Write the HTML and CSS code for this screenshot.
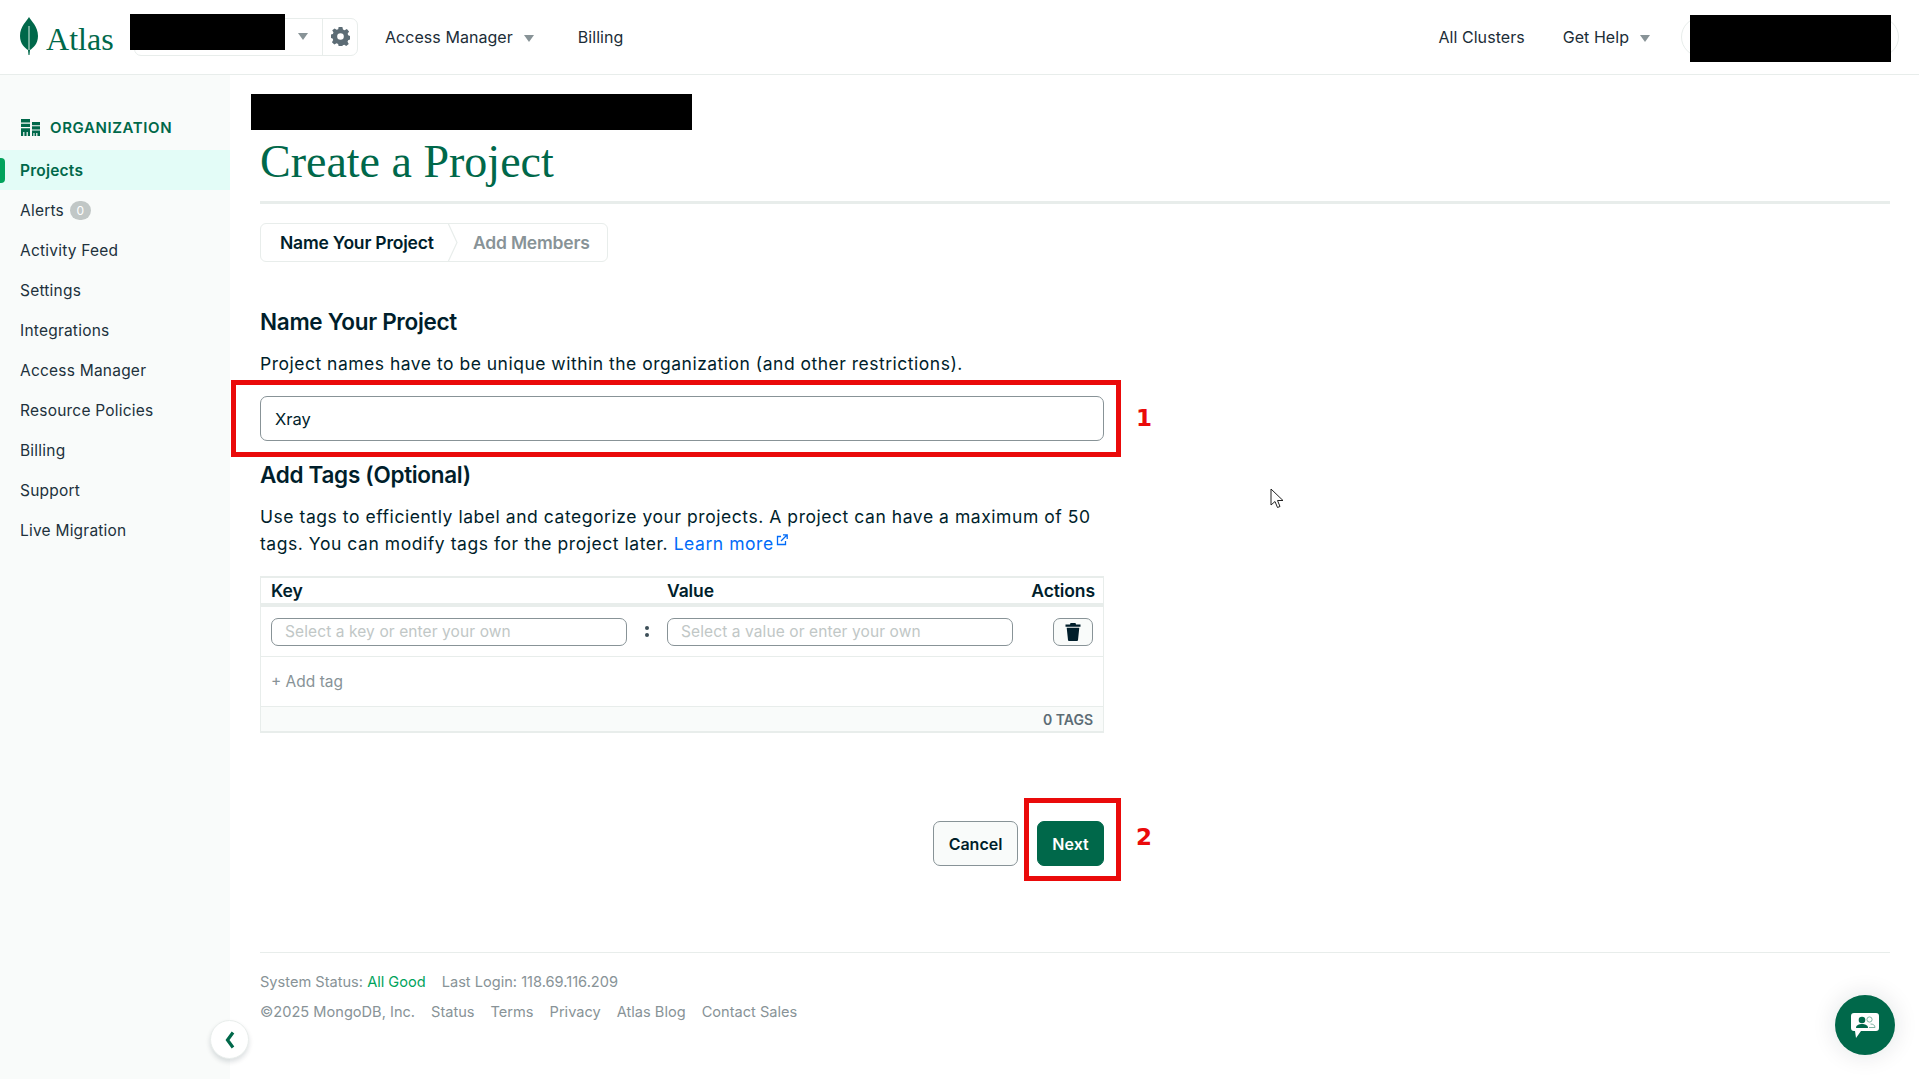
FILE: index.html
```html
<!DOCTYPE html>
<html lang="en">
<head>
<meta charset="utf-8">
<title>Create a Project</title>
<link rel="stylesheet" href="styles.css">
</head>
<body>
<header class="topbar">
  <div class="logo">
    <svg class="leaf" viewBox="0 0 18 38" width="18" height="38"><path d="M9 0C11 4 18 9 18 19C18 27 13 31 10 33L9.500 38H8.500L8 33C5 31 0 27 0 19C0 9 7 4 9 0Z" fill="#00684a"/><path d="M9 9V33" stroke="#b8dccd" stroke-width="1.200"/></svg>
    <span class="logo-text">Atlas</span>
  </div>
  <div class="chooser">
    <div class="chooser-name"><span class="caret"></span></div>
    <div class="chooser-gear">
      <svg viewBox="0 0 20 20" width="19" height="19"><path fill="#5c6c75" fill-rule="evenodd" d="M8 0h4l.6 2.700 1.700.7L16.700 2 19 4.800l-1.500 2.300.6 1.700L20 9.500v3.700l-2 .7-.6 1.600 1.300 2.300L16 20l-2-1.300-1.600.6L12 20H8l-.5-2.200-1.700-.6L3.500 18.500 1 16l1.300-2.300-.6-1.600L0 11.500V8l2-.6.6-1.700L1.300 3.500 3.800 1.500l2.100 1.400 1.700-.6zM10 6.500a3.500 3.500 0 1 0 0 7 3.500 3.500 0 0 0 0-7z"/></svg>
    </div>
  </div>
  <nav class="topnav">
    <a class="toplink">Access Manager<span class="caret caret-gap"></span></a>
    <a class="toplink">Billing</a>
  </nav>
  <div class="top-right">
    <a class="toplink">All Clusters</a>
    <a class="toplink">Get Help<span class="caret caret-gap"></span></a>
    <div class="user-pill"><div class="redact redact-user"></div></div>
  </div>
  <div class="redact redact-project"></div>
</header>

<div class="shell">
  <aside class="sidebar">
    <div class="org-head">
      <svg viewBox="0 0 19 17" width="19" height="17"><path fill="#00684a" d="M0 0h9v3.500H0zM0 4.700h9v3.400H0zM0 9.300h9V17H6.800v-4H5.600v4H3.400v-4H2.200v4H0zM11 3h8v3.200h-8zM11 7.300h8v3.200h-8zM11 11.600h8V17h-2.600v-3h-1.200v3h-1.700v-3h-1.100v3H11z"/></svg>
      <span>ORGANIZATION</span>
    </div>
    <ul class="side-list">
      <li class="side-item active">Projects</li>
      <li class="side-item">Alerts <span class="count">0</span></li>
      <li class="side-item">Activity Feed</li>
      <li class="side-item">Settings</li>
      <li class="side-item">Integrations</li>
      <li class="side-item">Access Manager</li>
      <li class="side-item">Resource Policies</li>
      <li class="side-item">Billing</li>
      <li class="side-item">Support</li>
      <li class="side-item">Live Migration</li>
    </ul>
  </aside>

  <main class="content">
    <div class="redact redact-crumb"></div>
    <h1 class="title">Create a Project</h1>
    <div class="steps">
      <span class="step step-on">Name Your Project</span>
      <svg class="step-sep" viewBox="0 0 11 39" width="11" height="39"><path d="M1 0L10 19.500L1 39" fill="none" stroke="#e8edeb" stroke-width="1.200"/></svg>
      <span class="step step-off">Add Members</span>
    </div>

    <section class="form">
      <h2 class="h-name">Name Your Project</h2>
      <p class="desc">Project names have to be unique within the organization (and other restrictions).</p>
      <div class="field">
        <input class="name-input" type="text" value="Xray">
        <div class="annot annot-input"></div>
        <span class="annot-num annot-num-1">1</span>
      </div>

      <h2 class="h-tags">Add Tags (Optional)</h2>
      <p class="para">Use tags to efficiently label and categorize your projects. A project can have a maximum of 50 tags. You can modify tags for the project later. <a class="learn">Learn more<svg viewBox="0 0 12 12" width="12" height="12"><path d="M9.500 7v3.500h-8v-8H5" fill="none" stroke="#016bf8" stroke-width="1.300"/><path d="M5 7l5.500-5.500M7 .8h4.200V5" fill="none" stroke="#016bf8" stroke-width="1.300"/></svg></a></p>

      <div class="tags">
        <div class="tags-head">
          <span>Key</span><span>Value</span><span class="actions-h">Actions</span>
        </div>
        <div class="tags-row">
          <input class="tag-input" type="text" placeholder="Select a key or enter your own">
          <span class="colon"><i></i><i></i></span>
          <input class="tag-input" type="text" placeholder="Select a value or enter your own">
          <button class="trash" type="button" aria-label="Delete">
            <svg viewBox="0 0 16 18" width="16" height="18"><path fill="#001e2b" d="M5.500 0h5l.5 1.500h4.500v2.200H.5V1.500H5zM1.700 4.800h12.600L13 17a1 1 0 0 1-1 1H4a1 1 0 0 1-1-1z"/></svg>
          </button>
        </div>
        <div class="tags-add">+ Add tag</div>
        <div class="tags-foot">0 TAGS</div>
      </div>

      <div class="form-actions">
        <button class="btn btn-cancel" type="button">Cancel</button>
        <div class="next-wrap">
          <button class="btn btn-next" type="button">Next</button>
          <div class="annot annot-next"></div>
          <span class="annot-num annot-num-2">2</span>
        </div>
      </div>
    </section>

    <footer class="foot">
      <div class="foot-line"><span>System Status: <b class="good">All Good</b></span><span>Last Login: 118.69.116.209</span></div>
      <div class="foot-line"><span>©2025 MongoDB, Inc.</span><span>Status</span><span>Terms</span><span>Privacy</span><span>Atlas Blog</span><span>Contact Sales</span></div>
    </footer>
  </main>
</div>

<button class="collapse" type="button" aria-label="Collapse">
  <svg viewBox="0 0 10 18" width="10" height="18"><path d="M8 1.500L2.500 9L8 16.500" fill="none" stroke="#00684a" stroke-width="3.200"/></svg>
</button>
<button class="chat" type="button" aria-label="Chat">
  <svg viewBox="0 0 28 26" width="28" height="26"><path fill="#fff" d="M3 0h22a3 3 0 0 1 3 3v12a3 3 0 0 1-3 3H10l-5 7-1-7H3a3 3 0 0 1-3-3V3a3 3 0 0 1 3-3z"/><circle cx="11" cy="7" r="3.300" fill="#00684a"/><path d="M5 15c0-3 3-4 6-4s6 1 6 4z" fill="#00684a"/><circle cx="18.500" cy="6.500" r="2.600" fill="none" stroke="#7fb5a3" stroke-width="1"/><path d="M18 14.500h6c0-2.500-2-3.500-4.500-3.500" fill="none" stroke="#7fb5a3" stroke-width="1"/></svg>
</button>
<svg class="cursor" viewBox="0 0 14 22" width="14" height="22"><path d="M1 1v16l4-3.500 2.500 6 2.500-1-2.500-6H13z" fill="#fff" stroke="#222" stroke-width="1"/></svg>
</body>
</html>
```
FILE: styles.css
```css
* { box-sizing: border-box; }
html, body { margin: 0; height: 1079px; overflow: hidden; }
body { font-family: Inter, "Noto Sans", sans-serif; color: #001e2b; background: #fff; position: relative; }
input, button { font-family: inherit; }
p, h1, h2, ul { margin: 0; padding: 0; }

.redact { background: #000; }

.topbar { height: 75px; border-bottom: 1px solid #e8edeb; display: flex; align-items: center; position: relative; font-size: 16px; letter-spacing: .05px; color: #1c2d38; }
.logo { width: 134px; padding-left: 20px; display: flex; align-items: center; gap: 8px; margin-top: -2px; }
.leaf { flex: none; }
.logo-text { font-family: "Liberation Serif", serif; font-size: 32px; color: #00684a; line-height: 38px; margin-top: 6px; }
.chooser { width: 224px; height: 38px; margin-top: -1px; border: 1px solid #e8edeb; border-radius: 7px; display: flex; }
.chooser-name { flex: 1; display: flex; align-items: center; justify-content: flex-end; padding-right: 14px; border-right: 1px solid #e8edeb; }
.chooser-gear { width: 34px; display: flex; align-items: center; justify-content: center; }
.caret { display: inline-block; width: 0; height: 0; border-left: 5.500px solid transparent; border-right: 5.500px solid transparent; border-top: 7px solid #889397; }
.caret-gap { margin-left: 11px; vertical-align: 1px; }
.topnav { display: flex; gap: 44px; margin-left: 27px; }
.toplink { white-space: nowrap; }
.top-right { margin-left: auto; display: flex; align-items: center; gap: 38px; padding-right: 20px; }
.user-pill { width: 218px; height: 40px; margin-left: -7px; border: 1px solid #e8edeb; border-radius: 20px; position: relative; }
.redact-user { position: absolute; left: 8px; top: -3px; width: 201px; height: 47px; }
.redact-project { position: absolute; left: 130px; top: 14px; width: 155px; height: 36px; }

.shell { display: flex; height: 1004px; }
.sidebar { width: 230px; flex: none; background: #f9fbfa; padding-top: 40px; }
.org-head { height: 24px; padding-left: 21px; display: flex; align-items: center; gap: 10px; margin-bottom: 11px; color: #00684a; font-weight: 600; font-size: 15px; letter-spacing: .6px; }
.side-list { list-style: none; }
.side-item { height: 40px; padding-left: 20px; display: flex; align-items: center; gap: 6px; font-size: 15.500px; letter-spacing: .22px; color: #21313c; position: relative; }
.side-item.active { background: #e3fcf7; color: #00684a; font-weight: 600; }
.side-item.active::before { content: ""; position: absolute; left: 0; top: 8px; width: 5px; height: 25px; background: #00a35c; border-radius: 0 4px 4px 0; }
.count { width: 21px; height: 19px; border-radius: 10px; background: #c1c7c6; color: #fff; font-size: 12px; display: inline-flex; align-items: center; justify-content: center; }

.content { flex: 1; padding: 19px 29px 0 30px; min-width: 0; }
.redact-crumb { width: 441px; height: 36px; margin-left: -9px; }
.title { font-family: "Liberation Serif", serif; font-weight: 400; font-size: 46px; line-height: 50px; color: #00684a; padding: 7px 0 0; height: 74px; border-bottom: 3px solid #e8edeb; }
.steps { margin-top: 19px; width: 348px; height: 39px; border: 1px solid #e8edeb; border-radius: 6px; display: flex; align-items: center; font-size: 17.500px; font-weight: 600; letter-spacing: -.2px; }
.step-on { padding-left: 19px; width: 186px; white-space: nowrap; }
.step-sep { flex: none; margin-top: -1px; margin-bottom: -1px; }
.step-off { margin-left: 15px; color: #889397; white-space: nowrap; }

.form { width: 844px; }
.h-name, .h-tags { font-size: 22.500px; font-weight: 600; line-height: 30px; letter-spacing: -.3px; }
.h-name { margin-top: 45px; }
.desc, .para { font-size: 17.500px; line-height: 27px; }
.desc { margin-top: 13px; letter-spacing: .5px; }
.field { position: relative; margin-top: 19px; }
.name-input { display: block; width: 100%; height: 45px; padding: 0 14px; border: 1px solid #889397; border-radius: 7px; font-size: 16.500px; color: #001e2b; background: #fff; outline: none; }
.annot { position: absolute; border: 5px solid #ea0a0a; pointer-events: none; }
.annot-input { left: -29px; right: -17px; top: -16px; bottom: -16px; }
.annot-next { left: -13px; right: -17px; top: -23px; bottom: -15px; }
.annot-num { position: absolute; color: #ea0a0a; font-family: "DejaVu Sans", sans-serif; font-weight: 700; font-size: 23px; line-height: 30px; }
.annot-num-1 { left: 876px; top: 7px; }
.annot-num-2 { left: 99px; top: 1px; }
.h-tags { margin-top: 19px; }
.para { margin-top: 13px; letter-spacing: .55px; }
.learn { color: #016bf8; white-space: nowrap; }
.learn svg { margin-left: 2px; vertical-align: 4px; }

.tags { margin-top: 19px; border: 1px solid #e8edeb; border-width: 2px 1px; height: 157px; display: flex; flex-direction: column; }
.tags-head { height: 29px; flex: none; border-bottom: 4px solid #e8edeb; display: grid; grid-template-columns: 396px 1fr auto; align-items: center; padding: 0 8px 1px 10px; font-size: 17.500px; font-weight: 600; letter-spacing: -.1px; }
.tags-row { height: 50px; flex: none; border-bottom: 1px solid #e8edeb; display: flex; align-items: center; padding: 0 10px; }
.tag-input { height: 28px; border: 1px solid #889397; border-radius: 7px; padding: 0 13px; font-size: 15.500px; letter-spacing: .1px; background: #fff; outline: none; }
.tag-input:first-child { width: 356px; }
.tag-input:nth-child(3) { width: 346px; }
.tag-input::placeholder { color: #c1c7c6; opacity: 1; }
.colon { width: 40px; flex: none; display: flex; flex-direction: column; align-items: center; gap: 3px; }
.colon i { width: 4px; height: 4px; border-radius: 50%; background: #3d4f58; }
.trash { width: 40px; height: 28px; margin-left: 40px; flex: none; border: 1px solid #889397; border-radius: 7px; background: #f9fbfa; padding: 0; display: flex; align-items: center; justify-content: center; }
.tags-add { flex: 1; display: flex; align-items: center; padding-left: 10px; font-size: 15.500px; color: #889397; }
.tags-foot { height: 25px; flex: none; border-top: 1px solid #e8edeb; background: #f9fbfa; display: flex; align-items: center; justify-content: flex-end; padding-right: 10px; font-size: 14px; font-weight: 600; color: #5c6c75; }

.form-actions { margin-top: 88px; display: flex; justify-content: flex-end; gap: 19px; }
.next-wrap { position: relative; }
.btn { height: 45px; border-radius: 7px; font-size: 16px; font-weight: 600; padding: 0; }
.btn-cancel { width: 85px; border: 1px solid #889397; background: #f9fbfa; color: #001e2b; }
.btn-next { width: 67px; border: 1px solid #00684a; background: #00684a; color: #fff; display: block; }

.foot { margin-top: 86px; border-top: 1px solid #e8edeb; padding-top: 14px; font-size: 14.600px; color: #889397; }
.foot-line { display: flex; gap: 16px; height: 30px; align-items: center; }
.good { font-weight: 400; color: #00a35c; }

.collapse { position: fixed; left: 210px; top: 1020px; width: 39px; height: 39px; border-radius: 50%; border: 1px solid #e8edeb; background: #fff; box-shadow: 0 3px 5px rgba(0,30,43,.14); padding: 0; display: flex; align-items: center; justify-content: center; }
.chat { position: fixed; left: 1835px; top: 995px; width: 60px; height: 60px; border: 0; border-radius: 50%; background: #00684a; box-shadow: 0 0 24px rgba(0,30,43,.12); padding: 2px 0 0; display: flex; align-items: center; justify-content: center; }
.cursor { position: fixed; left: 1270px; top: 488px; }
```
